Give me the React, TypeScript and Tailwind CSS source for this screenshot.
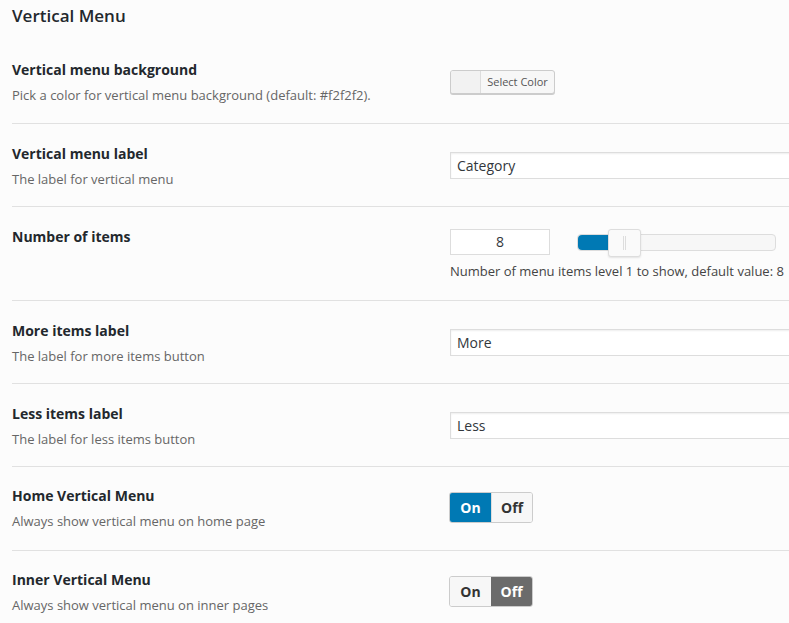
import React from 'react';

const font = { fontFamily: '"Open Sans", "Noto Sans", sans-serif' };

const Label = ({ title, desc }: { title: string; desc?: string }) => (
  <div className="w-[438px] shrink-0">
    <div className="text-[14px] font-bold leading-[20px] text-[#23282d]">{title}</div>
    {desc && <div className="mt-[5px] text-[13px] leading-[20px] text-[#666]">{desc}</div>}
  </div>
);

const TextInput = ({ value }: { value: string }) => (
  <div className="mt-[8px] h-[27px] w-[400px] shrink-0 border border-[#ddd] bg-white px-[6px] text-[14px] leading-[25px] text-[#32373c] shadow-[inset_0_1px_2px_rgba(0,0,0,0.07)]">
    {value}
  </div>
);

const Toggle = ({ on }: { on: boolean }) => (
  <div className="ml-[-1px] mt-[6px] flex h-[31px] w-[84px] overflow-hidden rounded-[3px] border border-[#ccc] text-[14px] font-bold leading-[29px]">
    <div className={on ? 'w-[41px] bg-[#0079b4] text-center text-white' : 'w-[41px] bg-[#f7f7f7] text-center text-[#333]'}>On</div>
    <div className={on ? 'flex-1 border-l border-[#ddd] bg-[#f7f7f7] text-center text-[#333]' : 'flex-1 bg-[#6b6b6b] text-center text-white'}>Off</div>
  </div>
);

export default function App() {
  return (
    <div className="h-[623px] w-[789px] overflow-hidden bg-[#fcfcfc]" style={font}>
      <h2 className="pl-[12px] pt-[4px] text-[17px] font-semibold leading-[24px] text-[#23282d]">Vertical Menu</h2>

      <div className="ml-[12px] mt-[32px]">
        {/* background color */}
        <div className="flex pb-[18px]">
          <Label title="Vertical menu background" desc="Pick a color for vertical menu background (default: #f2f2f2)." />
          <div className="mt-[10px] flex h-[24px] w-[105px] overflow-hidden rounded-[3px] border border-[#ccc] bg-[#f7f7f7] shadow-[0_1px_0_#ccc]">
            <div className="w-[30px] border-r border-[#ddd] bg-[#f2f2f2]" />
            <div className="flex-1 text-center text-[11px] leading-[22px] text-[#555]">Select Color</div>
          </div>
        </div>

        <div className="flex border-t border-[#e1e1e1] pb-[17px] pt-[20px]">
          <Label title="Vertical menu label" desc="The label for vertical menu" />
          <TextInput value="Category" />
        </div>

        {/* number of items */}
        <div className="flex border-t border-[#e1e1e1] pb-[19px] pt-[20px]">
          <Label title="Number of items" />
          <div className="mt-[2px]">
            <div className="flex items-center">
              <div className="h-[26px] w-[100px] border border-[#ddd] bg-white text-center text-[14px] leading-[24px] text-[#32373c]">8</div>
              <div className="relative ml-[27px] h-[17px] w-[199px] rounded-[4px] border border-[#ddd] bg-[#f7f7f7]">
                <div className="h-full w-[40px] rounded-l-[4px] bg-[#0079b4]" />
                <div className="absolute left-[30px] top-[-6px] flex h-[28px] w-[33px] items-center justify-center rounded-[3px] border border-[#ddd] bg-[#fafafa] shadow-[0_1px_2px_rgba(0,0,0,0.1)]">
                  <div className="h-[14px] w-[3px] border-x border-[#ddd]" />
                </div>
              </div>
            </div>
            <div className="mt-[6px] text-[13px] leading-[20px] text-[#444]">Number of menu items level 1 to show, default value: 8</div>
          </div>
        </div>

        <div className="flex border-t border-[#e1e1e1] pb-[17px] pt-[20px]">
          <Label title="More items label" desc="The label for more items button" />
          <TextInput value="More" />
        </div>

        <div className="flex border-t border-[#e1e1e1] pb-[17px] pt-[20px]">
          <Label title="Less items label" desc="The label for less items button" />
          <TextInput value="Less" />
        </div>

        <div className="flex border-t border-[#e1e1e1] pb-[19px] pt-[19px]">
          <Label title="Home Vertical Menu" desc="Always show vertical menu on home page" />
          <Toggle on />
        </div>

        <div className="flex border-t border-[#e1e1e1] pb-[18px] pt-[19px]">
          <Label title="Inner Vertical Menu" desc="Always show vertical menu on inner pages" />
          <Toggle on={false} />
        </div>
      </div>
    </div>
  );
}
